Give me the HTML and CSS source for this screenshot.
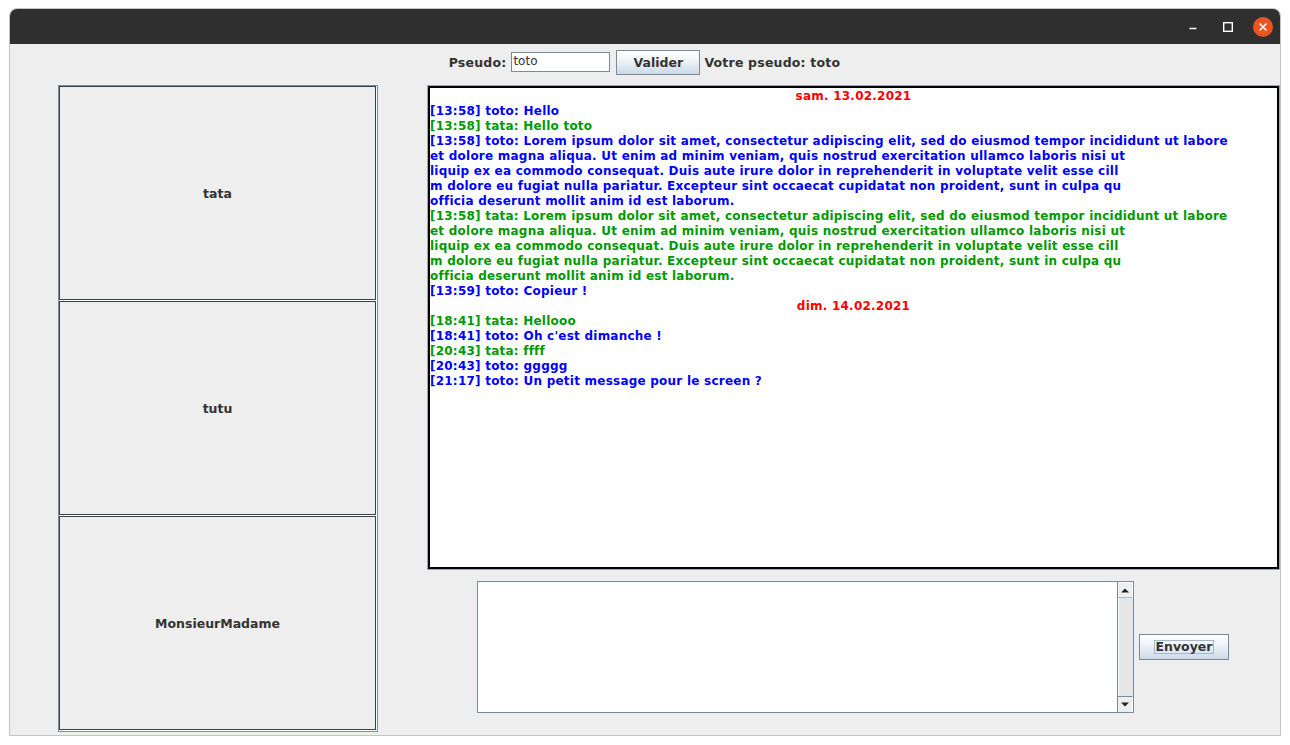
FILE: index.html
```html
<!DOCTYPE html>
<html lang="fr">
<head>
<meta charset="utf-8">
<title>Chat</title>
<link rel="stylesheet" href="styles.css">
</head>
<body>
<div class="window">
  <div class="titlebar">
    <span class="tb-btn">
      <svg width="12" height="12" viewBox="0 0 12 12"><path d="M2.5 7.5h7" stroke="#fff" stroke-width="1.4"/></svg>
    </span>
    <span class="tb-btn">
      <svg width="12" height="12" viewBox="0 0 12 12"><rect x="1.7" y="1.7" width="8.6" height="8.6" fill="none" stroke="#fff" stroke-width="1.4"/></svg>
    </span>
    <span class="tb-btn">
      <svg width="22" height="22" viewBox="0 0 22 22"><circle cx="11" cy="11" r="10" fill="#e95420"/><path d="M7.5 7.5l7 7M14.5 7.5l-7 7" stroke="#fff" stroke-width="1.5"/></svg>
    </span>
  </div>
  <div class="content">
    <div class="toprow">
      <span class="label">Pseudo:</span>
      <span class="field">toto</span>
      <span class="jbutton valider">Valider</span>
      <span class="label">Votre pseudo: toto</span>
    </div>
    <div class="main">
      <div class="userlist">
        <div class="user">tata</div>
        <div class="user">tutu</div>
        <div class="user">MonsieurMadame</div>
      </div>
      <div class="rightcol">
        <div class="chat-outer">
          <div class="chat">
            <div class="date">sam. 13.02.2021</div>
            <div class="msg me">[13:58] toto: Hello</div>
            <div class="msg other">[13:58] tata: Hello toto</div>
            <div class="msg me">[13:58] toto: Lorem ipsum dolor sit amet, consectetur adipiscing elit, sed do eiusmod tempor incididunt ut labore<br>et dolore magna aliqua. Ut enim ad minim veniam, quis nostrud exercitation ullamco laboris nisi ut<br>liquip ex ea commodo consequat. Duis aute irure dolor in reprehenderit in voluptate velit esse cill<br>m dolore eu fugiat nulla pariatur. Excepteur sint occaecat cupidatat non proident, sunt in culpa qu<br>officia deserunt mollit anim id est laborum.</div>
            <div class="msg other">[13:58] tata: Lorem ipsum dolor sit amet, consectetur adipiscing elit, sed do eiusmod tempor incididunt ut labore<br>et dolore magna aliqua. Ut enim ad minim veniam, quis nostrud exercitation ullamco laboris nisi ut<br>liquip ex ea commodo consequat. Duis aute irure dolor in reprehenderit in voluptate velit esse cill<br>m dolore eu fugiat nulla pariatur. Excepteur sint occaecat cupidatat non proident, sunt in culpa qu<br>officia deserunt mollit anim id est laborum.</div>
            <div class="msg me">[13:59] toto: Copieur !</div>
            <div class="date">dim. 14.02.2021</div>
            <div class="msg other">[18:41] tata: Hellooo</div>
            <div class="msg me">[18:41] toto: Oh c'est dimanche !</div>
            <div class="msg other">[20:43] tata: ffff</div>
            <div class="msg me">[20:43] toto: ggggg</div>
            <div class="msg me">[21:17] toto: Un petit message pour le screen ?</div>
          </div>
        </div>
        <div class="bottom">
          <div class="composer">
            <div class="vscroll">
              <div class="sb-btn up"><svg width="8" height="5" viewBox="0 0 8 5"><path d="M0 4.5L4 0.5L8 4.5Z" fill="#222"/></svg></div>
              <div class="sb-track"></div>
              <div class="sb-btn down"><svg width="8" height="5" viewBox="0 0 8 5"><path d="M0 0.5L4 4.5L8 0.5Z" fill="#222"/></svg></div>
            </div>
          </div>
          <span class="jbutton envoyer"><span class="focus">Envoyer</span></span>
        </div>
      </div>
    </div>
  </div>
</div>
</body>
</html>
```

FILE: styles.css
```css
html, body {
  margin: 0;
  padding: 0;
  background: #ffffff;
}

body {
  font-family: "DejaVu Sans", "Noto Sans", sans-serif;
}

.window {
  margin: 8px 0 0 9px;
  width: 1272px;
  height: 728px;
  box-sizing: border-box;
  border: 1px solid #c3c3c3;
  border-radius: 8px 8px 0 0;
  overflow: hidden;
  background: #eeeeee;
  display: flex;
  flex-direction: column;
}

.titlebar {
  height: 35px;
  flex: none;
  background: #2f2f2f;
  display: flex;
  justify-content: flex-end;
  align-items: center;
}

.tb-btn {
  width: 35px;
  height: 35px;
  display: flex;
  align-items: center;
  justify-content: center;
}

.content {
  flex: 1;
  display: flex;
  flex-direction: column;
}

.toprow {
  height: 36px;
  display: flex;
  align-items: center;
  justify-content: center;
  padding-right: 1px;
}

.label {
  font-weight: bold;
  font-size: 12.5px;
  letter-spacing: 0.2px;
  color: #333333;
}

.field {
  width: 99px;
  height: 20px;
  box-sizing: border-box;
  margin: 0 6px 0 5px;
  border: 1px solid #7a8a99;
  background: #ffffff;
  font-size: 12px;
  color: #333333;
  padding-left: 1px;
  line-height: 17px;
}

.jbutton {
  box-sizing: border-box;
  border: 1px solid #7a8a99;
  background: linear-gradient(#ffffff 0%, #f2f6fa 35%, #dbe5ef 75%, #cbd8e6 100%);
  font-weight: bold;
  font-size: 12.5px;
  color: #333333;
  display: flex;
  align-items: center;
  justify-content: center;
}

.valider {
  width: 84px;
  height: 25px;
  margin-right: 4px;
}

.main {
  flex: 1;
  display: flex;
  padding-top: 5px;
  padding-left: 48px;
}

.userlist {
  width: 320px;
  height: 647px;
  box-sizing: border-box;
  border: 1px solid #7d8d9e;
  display: flex;
  flex-direction: column;
  flex: none;
}

.user {
  flex: 1;
  margin: 0 1px 1px 0;
  border: 1px solid #39424c;
  box-shadow: 1px 1px 0 #ffffff;
  display: flex;
  align-items: center;
  justify-content: center;
  font-weight: bold;
  font-size: 12.5px;
  color: #333333;
}

.rightcol {
  margin-left: 49px;
  width: 853px;
  display: flex;
  flex-direction: column;
}

.chat-outer {
  height: 485px;
  box-sizing: border-box;
  border: 1px solid #9aa7b4;
}

.chat {
  height: 100%;
  box-sizing: border-box;
  border: 2px solid #000000;
  padding-top: 1px;
  background: #ffffff;
  font-size: 12px;
  line-height: 15px;
  font-weight: bold;
  letter-spacing: 0.23px;
  white-space: nowrap;
  overflow: hidden;
}

.date {
  color: #ff0000;
  text-align: center;
}

.msg.me {
  color: #0000ff;
}

.msg.other {
  color: #009900;
}

.bottom {
  display: flex;
  align-items: center;
  justify-content: center;
  padding-top: 11px;
  padding-right: 1px;
}

.composer {
  width: 657px;
  height: 132px;
  box-sizing: border-box;
  border: 1px solid #7a8a99;
  background: #ffffff;
  display: flex;
  justify-content: flex-end;
}

.vscroll {
  width: 16px;
  box-sizing: border-box;
  border-left: 1px solid #7a8a99;
  background: #eeeeee;
  display: flex;
  flex-direction: column;
}

.sb-btn {
  height: 16px;
  box-sizing: border-box;
  display: flex;
  align-items: center;
  justify-content: center;
  background: #eeeeee;
  border-right: 1px solid #ffffff;
}

.sb-btn.up {
  border-bottom: 1px solid #a8bcd0;
  border-top: 1px solid #ffffff;
}

.sb-btn.down {
  border-top: 1px solid #7a8a99;
}

.sb-track {
  flex: 1;
  background: #e6e6e6;
  border-left: 1px solid #ffffff;
}

.envoyer {
  width: 90px;
  height: 26px;
  margin-left: 5px;
}

.focus {
  border: 1px solid #a3b8cc;
  padding: 0 1px;
  line-height: 12px;
}
```
